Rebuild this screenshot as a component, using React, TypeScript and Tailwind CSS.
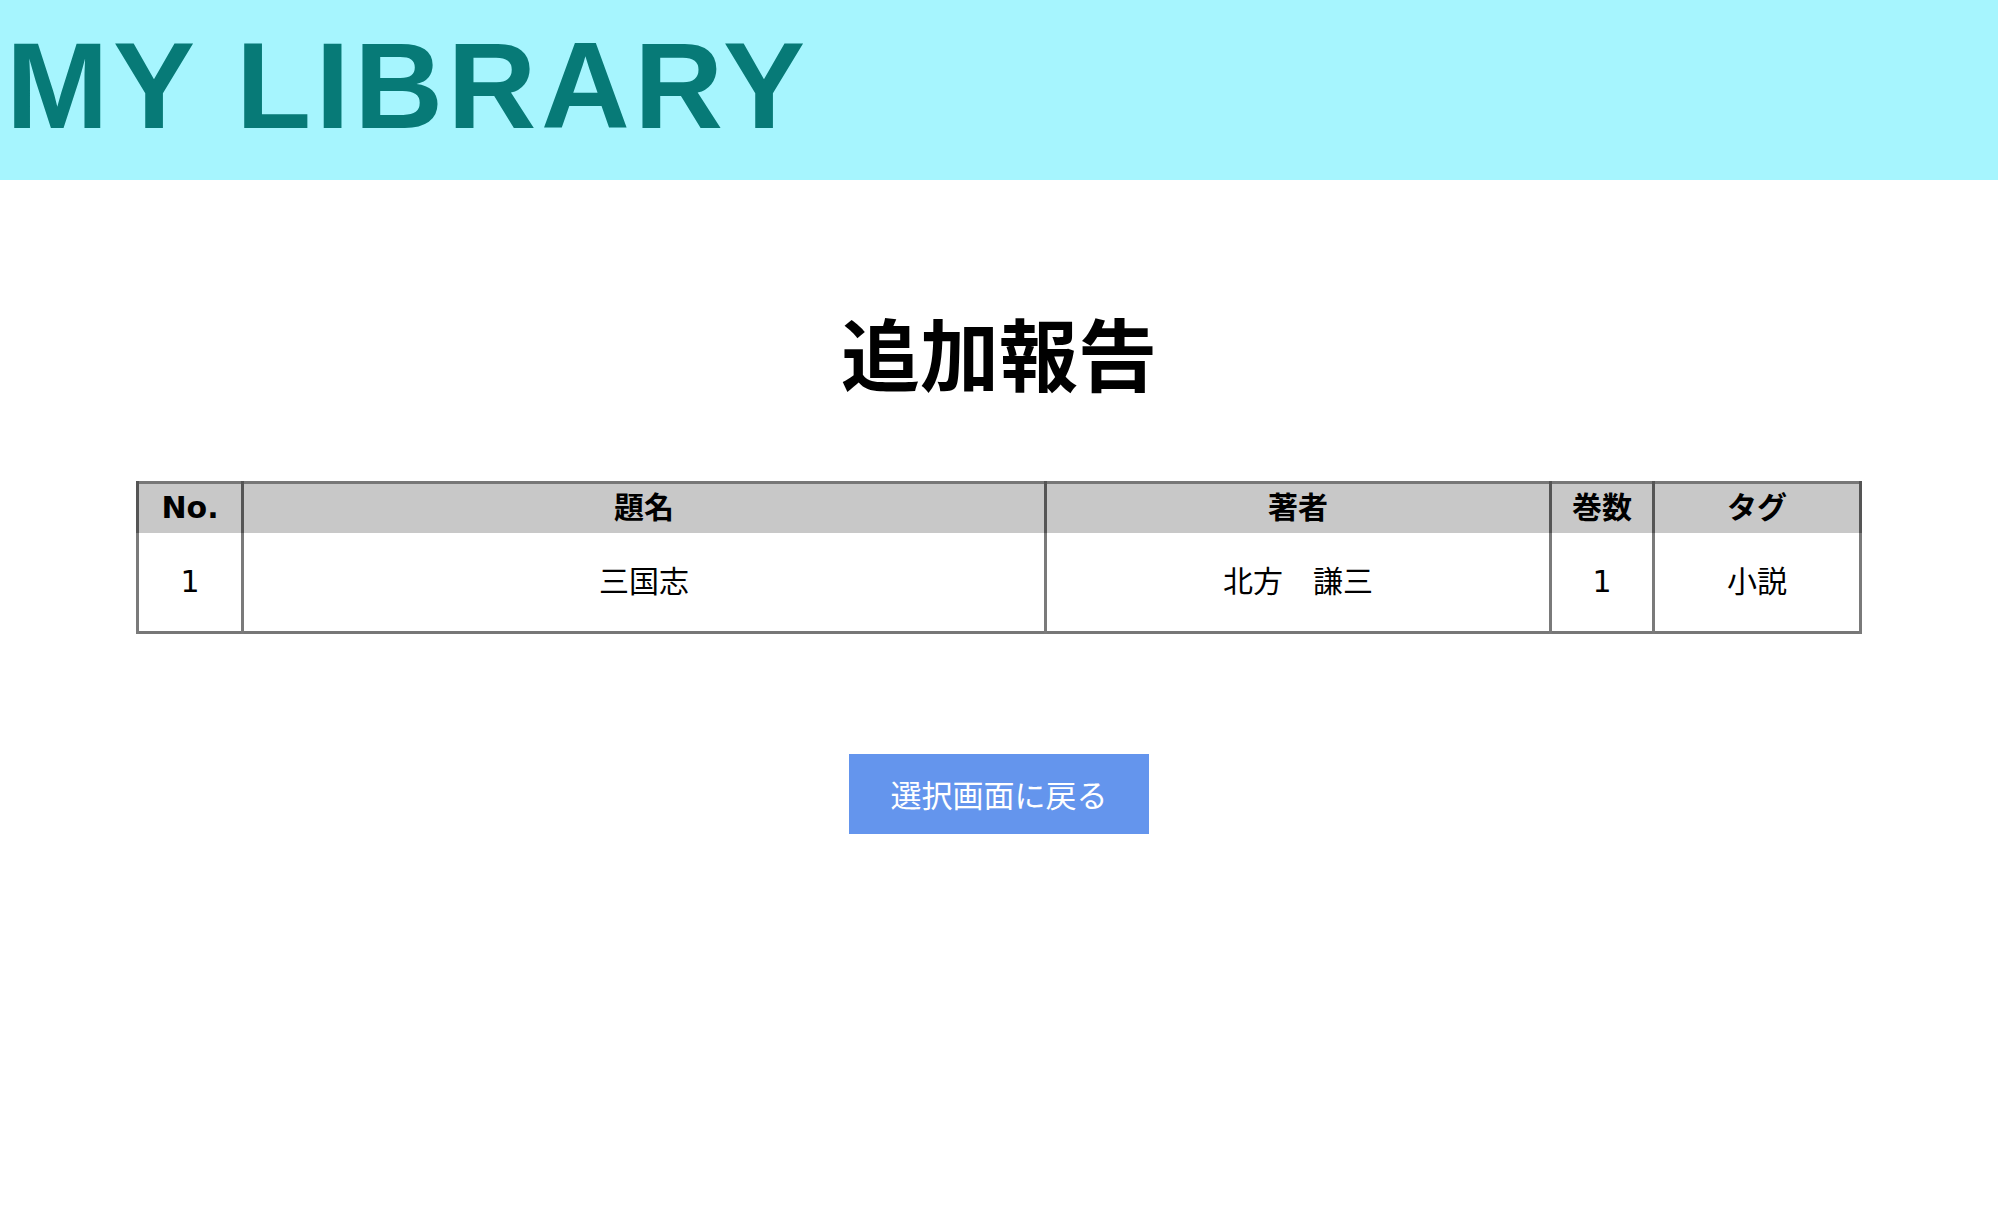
const columns = [
  { key: 'no', label: 'No.', width: 'w-[105px]' },
  { key: 'title', label: '題名', width: 'w-[803px]' },
  { key: 'author', label: '著者', width: 'w-[505px]' },
  { key: 'volumes', label: '巻数', width: 'w-[103px]' },
  { key: 'tag', label: 'タグ', width: 'w-[207px]' },
]

const books = [
  { no: '1', title: '三国志', author: '北方　謙三', volumes: '1', tag: '小説' },
]

export default function App() {
  return (
    <div className="min-h-[1232px] bg-white font-['DejaVu_Sans','Noto_Sans_CJK_JP',sans-serif] text-black">
      <header className="h-[180px] bg-[#a6f5fe] pt-[24px] pl-[6px]">
        <h1 className="font-['Liberation_Sans','Noto_Sans_CJK_JP',sans-serif] text-[123px] font-bold leading-none tracking-[4.5px] text-[#077a77]">
          MY LIBRARY
        </h1>
      </header>

      <main className="flex flex-col items-center">
        <h2 className="mt-[132px] font-['Noto_Sans_CJK_JP',sans-serif] text-[79px] font-bold leading-none">
          追加報告
        </h2>

        <table className="mt-[90px] w-[1723px] table-fixed border-collapse border-[3px] border-[#777]">
          <colgroup>
            {columns.map((col) => (
              <col key={col.key} className={col.width} />
            ))}
          </colgroup>
          <thead>
            <tr className="h-[50px] bg-[#c8c8c8]">
              {columns.map((col) => (
                <th key={col.key} className="border-x-[3px] border-x-[#555] text-[30px] font-bold leading-none">
                  {col.label}
                </th>
              ))}
            </tr>
          </thead>
          <tbody>
            {books.map((book) => (
              <tr key={book.no} className="h-[100px]">
                <td className="border-x-[3px] border-x-[#7a7a7a] text-center text-[30px]">{book.no}</td>
                <td className="border-x-[3px] border-x-[#7a7a7a] text-center text-[30px]">{book.title}</td>
                <td className="border-x-[3px] border-x-[#7a7a7a] text-center text-[30px]">{book.author}</td>
                <td className="border-x-[3px] border-x-[#7a7a7a] text-center text-[30px]">{book.volumes}</td>
                <td className="border-x-[3px] border-x-[#7a7a7a] text-center text-[30px]">{book.tag}</td>
              </tr>
            ))}
          </tbody>
        </table>

        <button className="mt-[120px] flex h-[80px] w-[300px] items-center justify-center bg-[#6495ed] font-['Noto_Sans_CJK_JP',sans-serif] text-[31px] text-white">
          選択画面に戻る
        </button>
      </main>
    </div>
  )
}
